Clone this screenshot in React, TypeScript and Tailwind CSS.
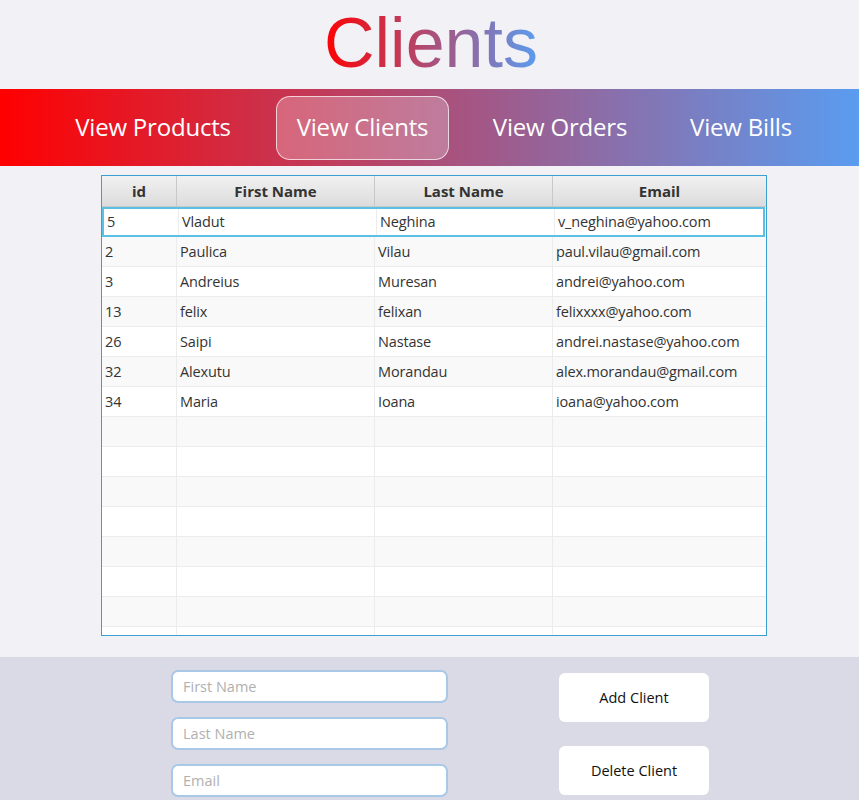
import React from "react";

type Client = { id: number; first: string; last: string; email: string };

const clients: Client[] = [
  { id: 5, first: "Vladut", last: "Neghina", email: "v_neghina@yahoo.com" },
  { id: 2, first: "Paulica", last: "Vilau", email: "paul.vilau@gmail.com" },
  { id: 3, first: "Andreius", last: "Muresan", email: "andrei@yahoo.com" },
  { id: 13, first: "felix", last: "felixan", email: "felixxxx@yahoo.com" },
  { id: 26, first: "Saipi", last: "Nastase", email: "andrei.nastase@yahoo.com" },
  { id: 32, first: "Alexutu", last: "Morandau", email: "alex.morandau@gmail.com" },
  { id: 34, first: "Maria", last: "Ioana", email: "ioana@yahoo.com" },
];

const cols = ["w-[75px]", "w-[198px]", "w-[178px]", "flex-1"];

export default function App() {
  const empty = Array.from({ length: 8 });

  return (
    <div className="w-[859px] h-[800px] bg-[#f2f1f6] flex flex-col overflow-hidden font-['Open_Sans',sans-serif]">
      {/* Titlu */}
      <div className="h-[89px] flex items-center justify-center">
        <h1 className="text-[70px] leading-none font-['Liberation_Sans',sans-serif] bg-[linear-gradient(to_right,#ff0000,#5a9cf0)] bg-clip-text text-transparent pb-[3px] pl-[3px]">
          Clients
        </h1>
      </div>

      {/* Meniu */}
      <nav className="h-[77px] bg-[linear-gradient(to_right,#ff0000,#5a9cf0)] flex items-center text-white text-[24px] tracking-[-0.2px] whitespace-nowrap">
        <div className="w-[72px] shrink-0" />
        <span className="w-[162px] shrink-0 text-center pb-[2px]">View Products</span>
        <div className="w-[42px] shrink-0" />
        <span className="w-[173px] h-[64px] shrink-0 flex items-center justify-center rounded-[14px] border-[1.5px] border-white/70 bg-white/25 pb-[2px]">
          View Clients
        </span>
        <div className="w-[41px] shrink-0" />
        <span className="w-[140px] shrink-0 text-center pb-[2px]">View Orders</span>
        <div className="w-[56px] shrink-0" />
        <span className="w-[110px] shrink-0 text-center pb-[2px]">View Bills</span>
      </nav>

      {/* Tabel */}
      <div className="pt-[9px] pl-[101px]">
        <div className="w-[666px] h-[461px] border border-[#3b9fd1] bg-white overflow-hidden text-[14.5px] text-[#333]">
          <div className="h-[31px] flex bg-gradient-to-b from-[#f1f1f1] to-[#dcdcdc] border-b border-[#c8c8c8] font-bold text-[15px] text-[#333]">
            {["id", "First Name", "Last Name", "Email"].map((h, i) => (
              <div key={h} className={`${cols[i]} flex items-center justify-center border-r border-[#c8c8c8] last:border-r-0`}>
                {h}
              </div>
            ))}
          </div>
          {clients.map((c, r) => (
            <div
              key={c.id}
              className={`h-[30px] flex ${r % 2 === 1 ? "bg-[#f9f9f9]" : "bg-white"} ${
                r === 0 ? "border-2 border-[#5bc0e4] mr-[1px]" : "border-b border-[#ececec]"
              }`}
            >
              {[c.id, c.first, c.last, c.email].map((v, i) => (
                <div key={i} className={`${cols[i]} flex items-center px-[3px] border-r border-[#ececec] last:border-r-0 tracking-[-0.15px]`}>
                  {v}
                </div>
              ))}
            </div>
          ))}
          {empty.map((_, r) => (
            <div key={r} className={`h-[30px] flex border-b border-[#ececec] ${r % 2 === 0 ? "bg-[#f9f9f9]" : "bg-white"}`}>
              {cols.map((w, i) => (
                <div key={i} className={`${w} border-r border-[#ececec] last:border-r-0`} />
              ))}
            </div>
          ))}
        </div>
      </div>

      {/* Formular */}
      <div className="mt-[21px] flex-1 bg-[#dadae6] flex">
        <div className="pl-[171px] pt-[13px] flex flex-col gap-[14px]">
          {["First Name", "Last Name", "Email"].map((p) => (
            <input
              key={p}
              placeholder={p}
              className="w-[277px] h-[33px] rounded-[7px] bg-white border-2 border-[#a9c8e6] px-[10px] text-[14.5px] placeholder-[#b0b0b0] outline-none"
            />
          ))}
        </div>
        <div className="pl-[111px] pt-[16px] flex flex-col gap-[24px]">
          <button className="w-[150px] h-[49px] bg-white rounded-[6px] text-[14.5px] text-[#111]">Add Client</button>
          <button className="w-[150px] h-[49px] bg-white rounded-[6px] text-[14.5px] text-[#111]">Delete Client</button>
        </div>
      </div>
    </div>
  );
}
